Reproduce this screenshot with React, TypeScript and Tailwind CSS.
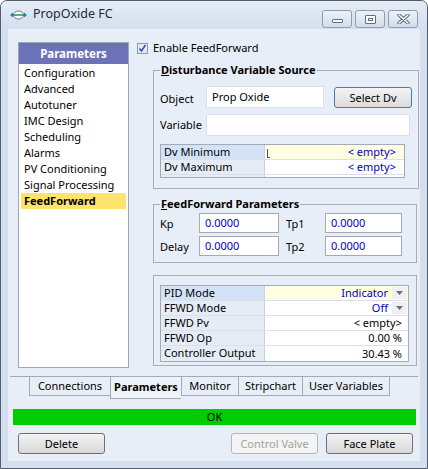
import React from "react";

const navItems = [
  "Configuration",
  "Advanced",
  "Autotuner",
  "IMC Design",
  "Scheduling",
  "Alarms",
  "PV Conditioning",
  "Signal Processing",
  "FeedForward",
];

const tabs = [
  { label: "Connections", w: "w-[81px]" },
  { label: "Parameters", w: "w-[71px]", active: true },
  { label: "Monitor", w: "w-[57px]" },
  { label: "Stripchart", w: "w-[64px]" },
  { label: "User Variables", w: "w-[88px]" },
];

function CaptionButton({ children }: { children: React.ReactNode }) {
  return (
    <div className="w-[30px] h-[18px] rounded-[3px] border border-[#8e9db1] bg-linear-to-b from-[#edf2f8] to-[#d2ddeb] flex items-center justify-center">
      {children}
    </div>
  );
}

function DropArrow() {
  return (
    <div className="w-[15px] h-[12px] bg-[#eef0f3] flex items-center justify-center">
      <svg width="7" height="4" viewBox="0 0 7 4">
        <path d="M0 0h7L3.5 4z" fill="#6b6f75" />
      </svg>
    </div>
  );
}

interface PropRowProps {
  label: string;
  value: string;
  selected?: boolean;
  blue?: boolean;
  dropdown?: boolean;
  last?: boolean;
}

function PropRow({ label, value, selected, blue, dropdown, last }: PropRowProps) {
  return (
    <div className={`flex h-[15px] ${last ? "" : "border-b border-[#d9e0ea]"}`}>
      <div
        className={`w-[104px] pl-[3px] leading-[14px] border-r border-[#c9d2de] ${
          selected ? "bg-[#d3e2f7]" : "bg-[#e6ecf5]"
        }`}
      >
        {label}
      </div>
      <div
        className={`flex-1 flex items-center justify-end leading-[14px] ${
          selected ? "bg-[#fffde2]" : "bg-white"
        } ${dropdown ? "pr-[1px] gap-[4px]" : "pr-[6px]"}`}
      >
        <span className={blue ? "text-[#0000c8]" : "text-black"}>{value}</span>
        {dropdown && <DropArrow />}
      </div>
    </div>
  );
}

function NumBox({ value }: { value: string }) {
  return (
    <div className="h-[20px] border border-[#a3aab3] bg-white pl-[5px] leading-[18px] text-[#0000c8]">
      {value}
    </div>
  );
}

export default function App() {
  return (
    <div className="w-[428px] h-[469px] bg-white font-['Noto_Sans',sans-serif] text-[11px] text-black">
      <div className="w-[428px] h-[469px] border border-[#535d6b] rounded-t-[7px] bg-[#d3dfee] flex flex-col">
        {/* title bar */}
        <div className="h-[28px] flex items-start px-[9px] rounded-t-[6px] bg-linear-to-b from-[#e4ecf6] to-[#d3dfee]">
          <div className="flex items-center h-[27px] gap-[5px]">
            <svg width="17" height="10" viewBox="0 0 17 10">
              <ellipse cx="8.5" cy="5" rx="5" ry="4" fill="#fff" stroke="#6d7b8a" />
              <path d="M3 5h11" stroke="#1f9a39" strokeWidth="1.5" />
              <path d="M0 5l3-2.5v5z M17 5l-3-2.5v5z" fill="#2a72d0" />
            </svg>
            <span className="text-[12.5px] text-[#1e2a38] ml-[1px]">PropOxide FC</span>
          </div>
          <div className="ml-auto mt-[9px] flex gap-[3px]">
            <CaptionButton>
              <div className="w-[11px] h-[4px] mt-[4px] rounded-[1px] border border-[#5f6d80] bg-white" />
            </CaptionButton>
            <CaptionButton>
              <div className="w-[11px] h-[9px] rounded-[1px] border border-[#5f6d80] bg-white flex items-center justify-center">
                <div className="w-[5px] h-[3px] border border-[#5f6d80]" />
              </div>
            </CaptionButton>
            <CaptionButton>
              <svg width="13" height="10" viewBox="0 0 13 10">
                <path d="M2 1l9 8M11 1l-9 8" stroke="#5f6d80" strokeWidth="3.4" strokeLinecap="round" />
                <path d="M2 1l9 8M11 1l-9 8" stroke="#fff" strokeWidth="1.4" strokeLinecap="round" />
              </svg>
            </CaptionButton>
          </div>
        </div>

        {/* client area */}
        <div className="mx-[7px] mb-[7px] flex-1 bg-[#e8eef7] flex flex-col">
          <div className="flex pt-[13px] pl-[10px]">
            {/* left nav */}
            <div className="w-[111px] h-[326px] border border-[#9ea7b8] bg-white">
              <div className="h-[21px] bg-[#6b72b8] text-white font-bold text-[11.5px] text-center leading-[21px]">
                Parameters
              </div>
              <div className="pt-[1px] px-[2px]">
                {navItems.map((item) => (
                  <div
                    key={item}
                    className={`h-[16px] leading-[16px] pl-[3px] ${
                      item === "FeedForward" ? "bg-[#ffe46c] font-bold" : ""
                    }`}
                  >
                    {item}
                  </div>
                ))}
              </div>
            </div>

            {/* right column */}
            <div className="ml-[7px] w-[280px] pt-[1px]">
              <div className="flex items-center h-[11px] gap-[5px] pl-[1px]">
                <svg width="11" height="11" viewBox="0 0 11 11">
                  <rect x="0.5" y="0.5" width="10" height="10" fill="#e1e8f1" stroke="#8b9bb1" />
                  <path d="M2.5 5.5l2 2.5 4-6" fill="none" stroke="#3656a8" strokeWidth="1.6" />
                </svg>
                <span>Enable FeedForward</span>
              </div>

              {/* Disturbance Variable Source */}
              <fieldset className="mt-[8px] ml-[17px] w-[264px] h-[127px] border border-[#a6adb8] px-[6px]">
                <legend className="px-[1px] font-bold leading-[16px]">
                  <span className="underline">D</span>isturbance Variable Source
                </legend>
                <div className="flex items-start mt-[8px]">
                  <div className="w-[46px] leading-[22px] pt-[2px]">Object</div>
                  <div className="w-[118px] h-[22px] border border-[#dbe1e8] bg-white pl-[5px] leading-[20px]">
                    Prop Oxide
                  </div>
                  <div className="ml-[10px] mt-[1px] w-[78px] h-[21px] rounded-[3px] border border-[#3c7fb1] bg-linear-to-b from-[#f4f4f4] to-[#dcdcdc] text-center leading-[19px]">
                    Select Dv
                  </div>
                </div>
                <div className="flex items-start mt-[4px]">
                  <div className="w-[46px] leading-[22px]">Variable</div>
                  <div className="w-[204px] h-[22px] border border-[#dbe1e8] bg-white" />
                </div>
                <div className="mt-[8px] w-[245px] h-[34px] overflow-hidden border border-[#a3abb6] bg-white">
                  <div className="flex h-[15px] border-b border-[#d9e0ea]">
                    <div className="w-[104px] pl-[3px] leading-[14px] bg-[#d3e2f7] border-r border-[#c9d2de]">
                      Dv Minimum
                    </div>
                    <div className="flex-1 flex items-center bg-[#fffde2] leading-[14px]">
                      <div className="ml-[2px] mt-[2px] w-[3px] h-[9px] border-l border-b border-[#555]" />
                      <span className="ml-auto mr-[8px] text-[#0000c8]">&lt; empty&gt;</span>
                    </div>
                  </div>
                  <div className="flex h-[15px] border-b border-[#d9e0ea]">
                    <div className="w-[104px] pl-[3px] leading-[14px] bg-[#e6ecf5] border-r border-[#c9d2de]">
                      Dv Maximum
                    </div>
                    <div className="flex-1 flex items-center bg-white leading-[14px]">
                      <span className="ml-auto mr-[8px] text-[#0000c8]">&lt; empty&gt;</span>
                    </div>
                  </div>
                  <div className="flex h-[15px]">
                    <div className="w-[104px] bg-[#e6ecf5] border-r border-[#c9d2de]" />
                    <div className="flex-1 bg-white" />
                  </div>
                </div>
              </fieldset>

              {/* FeedForward Parameters */}
              <fieldset className="mt-[7px] ml-[17px] w-[264px] h-[67px] border border-[#a6adb8] px-[6px]">
                <legend className="px-[1px] font-bold leading-[16px]">
                  <span className="underline">F</span>eedForward Parameters
                </legend>
                <div className="flex items-center mt-[1px]">
                  <div className="w-[39px] pt-[2px]">Kp</div>
                  <div className="w-[80px]">
                    <NumBox value="0.0000" />
                  </div>
                  <div className="ml-[7px] w-[39px] pt-[2px]">Tp1</div>
                  <div className="w-[77px]">
                    <NumBox value="0.0000" />
                  </div>
                </div>
                <div className="flex items-center mt-[3px]">
                  <div className="w-[39px] pt-[2px]">Delay</div>
                  <div className="w-[80px]">
                    <NumBox value="0.0000" />
                  </div>
                  <div className="ml-[7px] w-[39px] pt-[2px]">Tp2</div>
                  <div className="w-[77px]">
                    <NumBox value="0.0000" />
                  </div>
                </div>
              </fieldset>

              {/* status grid */}
              <div className="mt-[12px] ml-[17px] w-[264px] h-[91px] border border-[#a6adb8] pt-[9px] pl-[6px]">
                <div className="w-[249px] border border-[#a3abb6] bg-white">
                  <PropRow label="PID Mode" value="Indicator" selected blue dropdown />
                  <PropRow label="FFWD Mode" value="Off" blue dropdown />
                  <PropRow label="FFWD Pv" value="< empty>" />
                  <PropRow label="FFWD Op" value="0.00 %" />
                  <PropRow label="Controller Output" value="30.43 %" last />
                </div>
              </div>
            </div>
          </div>

          {/* tabs */}
          <div className="mt-[8px] ml-[2px] w-[408px] border-t border-[#a3aab5] flex items-start pl-[19px]">
            {tabs.map((t, i) => (
              <div
                key={t.label}
                className={`${t.w} text-center border-b border-l border-[#a3aab5] ${
                  i === tabs.length - 1 ? "border-r" : ""
                } ${t.active ? "h-[22px] leading-[20px] font-bold bg-[#eef3f9]" : "h-[19px] leading-[18px]"}`}
              >
                {t.label}
              </div>
            ))}
          </div>

          {/* status bar */}
          <div className="mt-[10px] ml-[5px] w-[403px] h-[16px] bg-[#00cc00] text-center leading-[16px]">
            OK
          </div>

          {/* buttons */}
          <div className="mt-[8px] flex items-center pl-[10px] pr-[7px]">
            <div className="w-[87px] h-[21px] rounded-[3px] border border-[#707070] bg-linear-to-b from-[#f3f3f3] to-[#d8d8d8] text-center leading-[19px]">
              Delete
            </div>
            <div className="ml-auto flex gap-[8px]">
              <div className="w-[87px] h-[21px] rounded-[3px] border border-[#b1b6ba] bg-[#f4f4f4] text-[#a3a3a3] text-center leading-[19px]">
                Control Valve
              </div>
              <div className="w-[87px] h-[21px] rounded-[3px] border border-[#707070] bg-linear-to-b from-[#f3f3f3] to-[#d8d8d8] text-center leading-[19px]">
                Face Plate
              </div>
            </div>
          </div>
        </div>
      </div>
    </div>
  );
}
